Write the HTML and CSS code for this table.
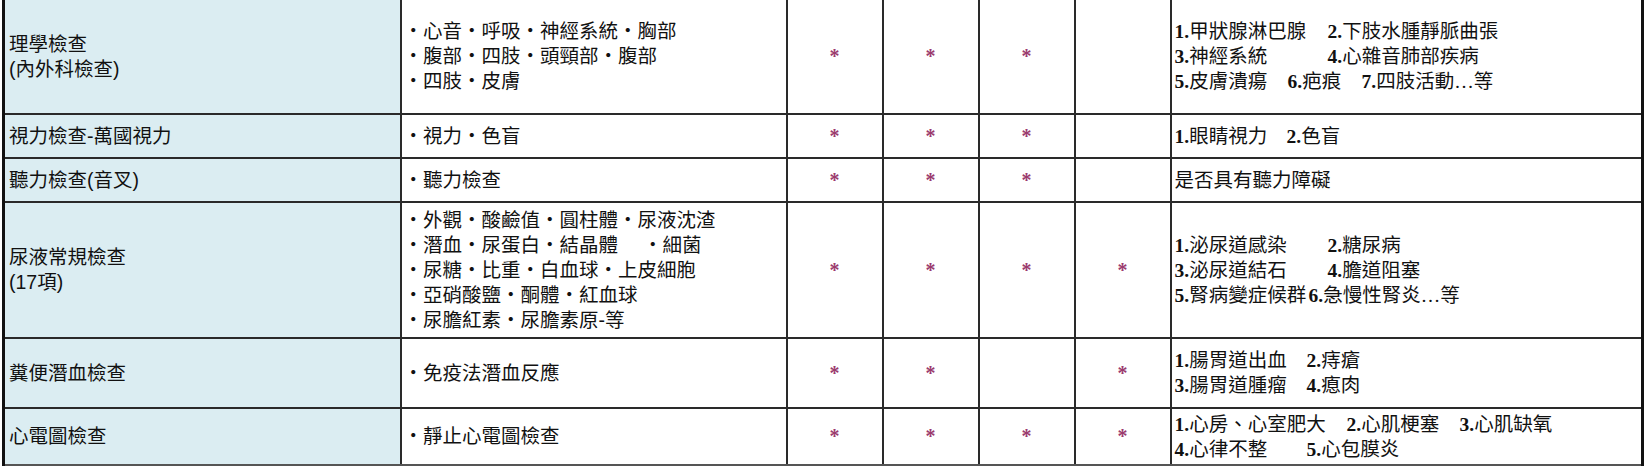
FILE: index.html
```html
<!DOCTYPE html>
<html lang="zh-Hant">
<head>
<meta charset="utf-8">
<title>健康檢查項目</title>
<link rel="stylesheet" href="styles.css">
</head>
<body>
<table class="exam">
  <colgroup>
    <col class="c-name">
    <col class="c-items">
    <col class="c-mark">
    <col class="c-mark">
    <col class="c-mark">
    <col class="c-mark">
    <col class="c-note">
  </colgroup>
  <tbody>
    <tr class="r1">
      <td class="name">理學檢查<br>(內外科檢查)</td>
      <td class="items">・心音・呼吸・神經系統・胸部<br>・腹部・四肢・頭頸部・腹部<br>・四肢・皮膚</td>
      <td class="mark">*</td>
      <td class="mark">*</td>
      <td class="mark">*</td>
      <td class="mark"></td>
      <td class="note">
        <div class="line"><span class="w153"><b>1.</b>甲狀腺淋巴腺</span><span><b>2.</b>下肢水腫靜脈曲張</span></div>
        <div class="line"><span class="w153"><b>3.</b>神經系統</span><span><b>4.</b>心雜音肺部疾病</span></div>
        <div class="line"><span class="w113"><b>5.</b>皮膚潰瘍</span><span class="w74"><b>6.</b>疤痕</span><span><b>7.</b>四肢活動…等</span></div>
      </td>
    </tr>
    <tr class="r2">
      <td class="name">視力檢查-萬國視力</td>
      <td class="items">・視力・色盲</td>
      <td class="mark">*</td>
      <td class="mark">*</td>
      <td class="mark">*</td>
      <td class="mark"></td>
      <td class="note">
        <div class="line"><span class="w112"><b>1.</b>眼睛視力</span><span><b>2.</b>色盲</span></div>
      </td>
    </tr>
    <tr class="r3">
      <td class="name">聽力檢查(音叉)</td>
      <td class="items">・聽力檢查</td>
      <td class="mark">*</td>
      <td class="mark">*</td>
      <td class="mark">*</td>
      <td class="mark"></td>
      <td class="note">
        <div class="line">是否具有聽力障礙</div>
      </td>
    </tr>
    <tr class="r4">
      <td class="name">尿液常規檢查<br>(17項)</td>
      <td class="items">・外觀・酸鹼值・圓柱體・尿液沈渣<br>・潛血・尿蛋白・結晶體　 ・細菌<br>・尿糖・比重・白血球・上皮細胞<br>・亞硝酸鹽・酮體・紅血球<br>・尿膽紅素・尿膽素原-等</td>
      <td class="mark">*</td>
      <td class="mark">*</td>
      <td class="mark">*</td>
      <td class="mark">*</td>
      <td class="note">
        <div class="line"><span class="w153"><b>1.</b>泌尿道感染</span><span><b>2.</b>糖尿病</span></div>
        <div class="line"><span class="w153"><b>3.</b>泌尿道結石</span><span><b>4.</b>膽道阻塞</span></div>
        <div class="line"><span class="w134"><b>5.</b>腎病變症候群</span><span><b>6.</b>急慢性腎炎…等</span></div>
      </td>
    </tr>
    <tr class="r5">
      <td class="name">糞便潛血檢查</td>
      <td class="items">・免疫法潛血反應</td>
      <td class="mark">*</td>
      <td class="mark">*</td>
      <td class="mark"></td>
      <td class="mark">*</td>
      <td class="note">
        <div class="line"><span class="w132"><b>1.</b>腸胃道出血</span><span><b>2.</b>痔瘡</span></div>
        <div class="line"><span class="w132"><b>3.</b>腸胃道腫瘤</span><span><b>4.</b>瘜肉</span></div>
      </td>
    </tr>
    <tr class="r6">
      <td class="name">心電圖檢查</td>
      <td class="items">・靜止心電圖檢查</td>
      <td class="mark">*</td>
      <td class="mark">*</td>
      <td class="mark">*</td>
      <td class="mark">*</td>
      <td class="note">
        <div class="line"><span class="w172"><b>1.</b>心房、心室肥大</span><span class="w113"><b>2.</b>心肌梗塞</span><span><b>3.</b>心肌缺氧</span></div>
        <div class="line"><span class="w132"><b>4.</b>心律不整</span><span><b>5.</b>心包膜炎</span></div>
      </td>
    </tr>
  </tbody>
</table>
</body>
</html>
```

FILE: styles.css
```css
html, body {
  margin: 0;
  padding: 0;
  background: #ffffff;
}

body {
  font-family: "Liberation Sans", "Noto Sans CJK TC", sans-serif;
  color: #111111;
  overflow: hidden;
}

.exam {
  border-collapse: collapse;
  table-layout: fixed;
  width: 1641px;
  margin-left: 2px;
  font-size: 19.5px;
  line-height: 25px;
}

.c-name { width: 397px; }
.c-items { width: 386px; }
.c-mark { width: 96px; }
.c-note { width: 472px; }

.exam td {
  border: 2px solid #2a2a2a;
  padding: 0;
  vertical-align: middle;
  white-space: nowrap;
}

.exam tr:first-child td {
  border-top: none;
}

.exam td:first-child {
  border-left: 3px solid #111111;
}

.exam td:last-child {
  border-right: 3px solid #111111;
}

.exam tr:last-child td {
  border-bottom: 2px solid #555555;
}

.r1 { height: 114px; }
.r2 { height: 44px; }
.r3 { height: 44px; }
.r4 { height: 136px; }
.r5 { height: 70px; }
.r6 { height: 57px; }

.exam td.name {
  background: #dbedf2;
  padding-left: 4px;
}

.exam td.items {
  padding-left: 2px;
}

.exam td.mark {
  text-align: center;
  color: #9b3a6e;
  font-family: "Liberation Serif", serif;
  font-weight: bold;
  font-size: 20px;
}

.exam td.note {
  padding-left: 3px;
  font-family: "Liberation Serif", "Noto Sans CJK TC", serif;
}

.line {
  display: flex;
  white-space: nowrap;
}

.line span {
  flex: none;
}

.note b {
  font-weight: bold;
}

.w74 { width: 74px; }
.w112 { width: 112px; }
.w113 { width: 113px; }
.w132 { width: 132px; }
.w134 { width: 134px; }
.w153 { width: 153px; }
.w172 { width: 172px; }
```
